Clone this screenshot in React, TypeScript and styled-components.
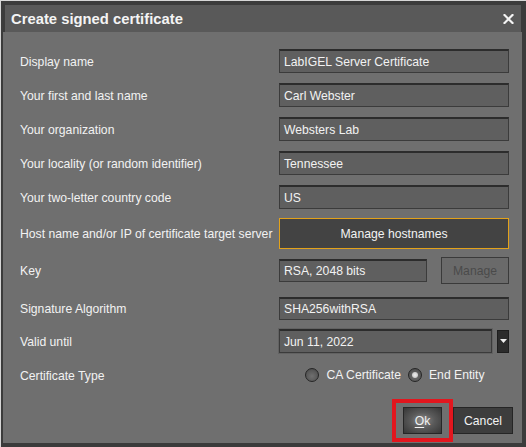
import React from "react";
import styled, { createGlobalStyle, css } from "styled-components";

const Global = createGlobalStyle`
  html, body { margin: 0; padding: 0; background: #3b3b3b; }
  body { font-family: "Liberation Sans", Arial, sans-serif; }
  * { box-sizing: border-box; }
`;

const Window = styled.div`
  width: 526px;
  height: 447px;
  background: #3b3b3b;
  border-top: 1px solid #d6d6d6;
  border-left: 1px solid #d6d6d6;
  padding-top: 4px;
  display: flex;
  flex-direction: column;
`;

const TitleBar = styled.div`
  height: 27px;
  margin: 0 5px 0 4px;
  background: #595959;
  display: flex;
  align-items: center;
  justify-content: space-between;
  padding: 0 7px 0 6px;
`;

const Title = styled.span`
  color: #f4f4f4;
  font-weight: bold;
  font-size: 14.8px;
`;

const CloseBtn = styled.span`
  display: flex;
  width: 11px;
  height: 10px;
  align-items: center;
  justify-content: center;
`;

const Body = styled.div`
  flex: 1;
  margin: 0 4px 4px 2px;
  background: #6f6f6f;
  padding: 17px 13px 0 17px;
  display: flex;
  flex-direction: column;
`;

const Row = styled.div<{ $h: number; $mt?: number }>`
  display: grid;
  grid-template-columns: 259px 230px;
  align-items: center;
  height: ${(p) => p.$h}px;
  margin-top: ${(p) => p.$mt ?? 0}px;
`;

const textBase = css`
  font-family: "Liberation Sans", Arial, sans-serif;
  font-size: 12.2px;
  color: #f2f2f2;
`;

const Label = styled.span`
  ${textBase};
  white-space: nowrap;
  padding-top: 1px;
`;

const Field = styled.div<{ $w?: number; $h?: number }>`
  ${textBase};
  width: ${(p) => (p.$w ? `${p.$w}px` : "100%")};
  height: ${(p) => p.$h ?? 24}px;
  background: #5f5f5f;
  border: 1px solid #3b3b3b;
  border-top: 2px solid #2c2c2c;
  display: flex;
  align-items: center;
  padding-left: 4px;
  white-space: nowrap;
`;

const DateField = styled(Field)`
  box-shadow: 0 0 0 1px #626262;
`;

const HostButton = styled.div`
  ${textBase};
  height: 31px;
  background: #434343;
  border: 1px solid #e3a21a;
  display: flex;
  align-items: center;
  justify-content: center;
`;

const Split = styled.div<{ $gap: number }>`
  display: flex;
  align-items: center;
  justify-content: space-between;
  gap: ${(p) => p.$gap}px;
`;

const DisabledButton = styled.div`
  ${textBase};
  color: #4a4a4a;
  width: 68px;
  height: 27px;
  background: #6a6a6a;
  border: 1px solid #3a3a3a;
  display: flex;
  align-items: center;
  justify-content: center;
`;

const DropButton = styled.div`
  width: 12px;
  height: 23px;
  background: #2c2c2c;
  border: 1px solid #1e1e1e;
  display: flex;
  align-items: center;
  justify-content: center;
`;

const Radios = styled.div`
  display: flex;
  align-items: center;
  justify-content: center;
  gap: 7px;
  padding-left: 2px;
`;

const RadioItem = styled.div`
  display: flex;
  align-items: center;
  gap: 7px;
  ${textBase};
`;

const RadioCircle = styled.span<{ $on?: boolean }>`
  width: 14px;
  height: 14px;
  border-radius: 50%;
  border: 1px solid #262626;
  background: radial-gradient(circle at 50% 60%, #707070 0%, #585858 60%, #3e3e3e 100%);
  display: flex;
  align-items: center;
  justify-content: center;
  &::after {
    content: "";
    display: ${(p) => (p.$on ? "block" : "none")};
    width: 6px;
    height: 6px;
    border-radius: 50%;
    background: radial-gradient(circle, #f0f0f0 0%, #cfcfcf 60%, #9a9a9a 100%);
  }
`;

const Footer = styled.div`
  display: flex;
  justify-content: flex-end;
  margin-top: 14px;
  margin-right: -4px;
`;

const Highlight = styled.div`
  border: 4px solid #e2161e;
  padding: 4px 7px;
`;

const OkButton = styled.div`
  ${textBase};
  width: 39px;
  height: 27px;
  border: 1px solid #262626;
  background: radial-gradient(ellipse at 50% 50%, #8e8e8e 0%, #5a5a5a 45%, #363636 100%);
  display: flex;
  align-items: center;
  justify-content: center;
  u { text-decoration: underline; text-underline-offset: 2px; }
`;

const CancelButton = styled.div`
  ${textBase};
  width: 60px;
  height: 27px;
  margin-top: 8px;
  background: #3d3d3d;
  border: 1px solid #252525;
  display: flex;
  align-items: center;
  justify-content: center;
`;

export default function App() {
  return (
    <>
      <Global />
      <Window>
        <TitleBar>
          <Title>Create signed certificate</Title>
          <CloseBtn>
            <svg width="11" height="10" viewBox="0 0 11 10">
              <path d="M1.5 1 L9.5 9 M9.5 1 L1.5 9" stroke="#f4f4f4" strokeWidth="2.2" strokeLinecap="square" />
            </svg>
          </CloseBtn>
        </TitleBar>
        <Body>
          <Row $h={24}>
            <Label>Display name</Label>
            <Field>LabIGEL Server Certificate</Field>
          </Row>
          <Row $h={24} $mt={10}>
            <Label>Your first and last name</Label>
            <Field>Carl Webster</Field>
          </Row>
          <Row $h={24} $mt={10}>
            <Label>Your organization</Label>
            <Field>Websters Lab</Field>
          </Row>
          <Row $h={24} $mt={10}>
            <Label>Your locality (or random identifier)</Label>
            <Field>Tennessee</Field>
          </Row>
          <Row $h={24} $mt={10}>
            <Label>Your two-letter country code</Label>
            <Field>US</Field>
          </Row>
          <Row $h={31} $mt={9}>
            <Label>Host name and/or IP of certificate target server</Label>
            <HostButton>Manage hostnames</HostButton>
          </Row>
          <Row $h={27} $mt={8}>
            <Label>Key</Label>
            <Split $gap={14}>
              <Field $w={148} $h={23}>RSA, 2048 bits</Field>
              <DisabledButton>Manage</DisabledButton>
            </Split>
          </Row>
          <Row $h={24} $mt={12}>
            <Label>Signature Algorithm</Label>
            <Field $h={23}>SHA256withRSA</Field>
          </Row>
          <Row $h={26} $mt={8}>
            <Label>Valid until</Label>
            <Split $gap={3}>
              <DateField $w={213} $h={24}>Jun 11, 2022</DateField>
              <DropButton>
                <svg width="7" height="4" viewBox="0 0 7 4">
                  <path d="M0 0 H7 L3.5 4 Z" fill="#f0f0f0" />
                </svg>
              </DropButton>
            </Split>
          </Row>
          <Row $h={20} $mt={11}>
            <Label>Certificate Type</Label>
            <Radios>
              <RadioItem>
                <RadioCircle />
                CA Certificate
              </RadioItem>
              <RadioItem>
                <RadioCircle $on />
                End Entity
              </RadioItem>
            </Radios>
          </Row>
          <Footer>
            <Highlight>
              <OkButton>
                <span>
                  <u>O</u>k
                </span>
              </OkButton>
            </Highlight>
            <CancelButton>Cancel</CancelButton>
          </Footer>
        </Body>
      </Window>
    </>
  );
}
